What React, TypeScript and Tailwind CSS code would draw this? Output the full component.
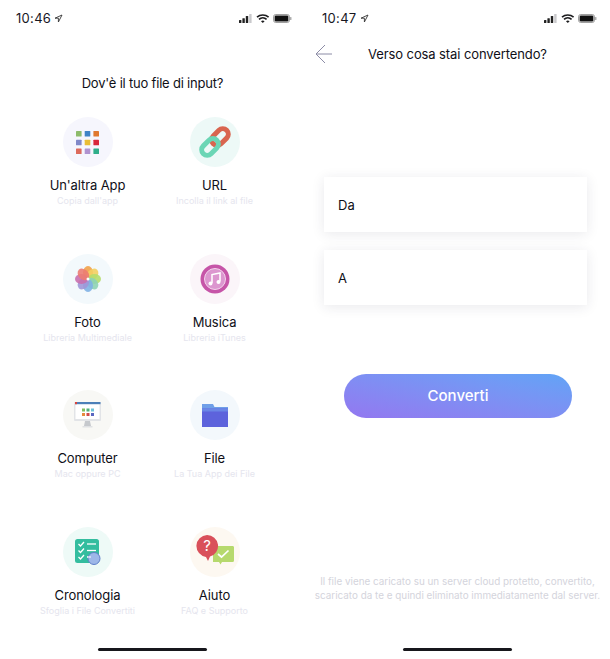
import React from "react";

function Status({ time, left }: { time: string; left: string }) {
  return (
    <div className={`flex h-[37px] shrink-0 items-center ${left} pr-[12px]`}>
      <span className="text-[13px] leading-none tracking-[0.3px] text-[#17171f]">{time}</span>
      <svg width="9" height="9" viewBox="0 0 9 9" className="ml-[3px]">
        <path d="M8 1 1 4.2h3.4V8z" fill="none" stroke="#333" strokeWidth="0.9" strokeLinejoin="round" />
      </svg>
      <svg width="54" height="11" viewBox="0 0 54 11" className="ml-auto">
        <rect x="0" y="7" width="2.4" height="3" rx=".5" fill="#222" />
        <rect x="3.4" y="5.2" width="2.4" height="4.8" rx=".5" fill="#222" />
        <rect x="6.8" y="3" width="2.4" height="7" rx=".5" fill="#222" />
        <rect x="10.2" y="1" width="2.4" height="9" rx=".5" fill="#c9c9cc" />
        <path d="M18 4.2a8.6 8.6 0 0 1 11.6 0M20 6.3a5.6 5.6 0 0 1 7.6 0" fill="none" stroke="#1c1c1e" strokeWidth="1.6" />
        <path d="M22 8.3a2.6 2.6 0 0 1 3.6 0L23.800 10z" fill="#1c1c1e" />
        <rect x="34.500" y="1.500" width="16" height="8" rx="2.200" fill="none" stroke="#888" strokeWidth=".8" />
        <rect x="35.600" y="2.600" width="13.800" height="5.800" rx="1.200" fill="#111" />
        <rect x="51.200" y="4" width="1.200" height="3" rx=".5" fill="#999" />
      </svg>
    </div>
  );
}

function HomeBar() {
  return (
    <div className="flex h-[11px] shrink-0 justify-center">
      <div className="h-[3px] w-[109px] rounded-full bg-[#17171c]" />
    </div>
  );
}

const AppsIcon = (
  <svg width="23" height="23" viewBox="0 0 23 23">
    {["#8dbb6b", "#3f83c6", "#e0782f", "#8088c8", "#e9bd34", "#d8283c", "#dd6a5c", "#b093d0", "#2fae8a"].map((c, i) => (
      <rect key={i} x={(i % 3) * 8.700} y={Math.floor(i / 3) * 8.700} width="5.600" height="5.600" rx=".6" fill={c} />
    ))}
  </svg>
);

const LinkIcon = (
  <svg width="32" height="32" viewBox="0 0 32 32">
    <g transform="rotate(-45 16 16)">
      <rect x="13.500" y="10.500" width="19" height="11" rx="5.500" fill="none" stroke="#d9654f" strokeWidth="5" />
      <rect x="-0.500" y="10.500" width="19" height="11" rx="5.500" fill="none" stroke="#6bd6b5" strokeWidth="5" />
    </g>
  </svg>
);

const PhotoIcon = (
  <svg width="28" height="28" viewBox="0 0 28 28">
    {["#f2a24a", "#f4cf60", "#b5dd6c", "#8ed3b4", "#7fb1e4", "#9e97d8", "#c96fae", "#ec7c72"].map((c, i) => (
      <ellipse key={i} cx="14" cy="7.500" rx="5" ry="6.500" fill={c} fillOpacity=".9" transform={`rotate(${i * 45} 14 14)`} />
    ))}
    <circle cx="14" cy="14" r="1.500" fill="#fff" />
  </svg>
);

const MusicIcon = (
  <svg width="30" height="30" viewBox="0 0 30 30">
    <circle cx="15" cy="15" r="14.500" fill="#c655a8" />
    <circle cx="15" cy="15" r="10.500" fill="#dc96cf" stroke="#f3d4ec" strokeWidth="1" />
    <path d="M12 19V10.500l8-1.500V17.500" fill="none" stroke="#fff" strokeWidth="1.500" />
    <circle cx="10.500" cy="19.500" r="2" fill="#fff" />
    <circle cx="18.500" cy="18" r="2" fill="#fff" />
  </svg>
);

const ComputerIcon = (
  <svg width="28" height="28" viewBox="0 0 28 28">
    <rect x="0" y="1" width="27" height="19" rx="1" fill="#e2e4e7" />
    <rect x="1.500" y="2" width="24" height="16" fill="#fff" />
    <rect x="1" y="1" width="25.500" height="2.200" fill="#4b7fb8" />
    <rect x="1" y="1" width="2" height="2.200" fill="#d9453d" />
    {["#7fbf5f", "#4fb07a", "#6ec3d8", "#e68a3c", "#d14b4b", "#5a66c0"].map((c, i) => (
      <rect key={i} x={8 + (i % 3) * 4.500} y={7.500 + Math.floor(i / 3) * 4.500} width="3" height="3" fill={c} />
    ))}
    <path d="M11 20h5l1 5h-7z" fill="#c6c9cd" />
    <rect x="8.500" y="25" width="10" height="1.500" fill="#dfe1e4" />
  </svg>
);

const FolderIcon = (
  <svg width="26" height="24" viewBox="0 0 26 24">
    <path d="M0 1h11l1.500 3H26v4H0z" fill="#6f9fe8" />
    <rect x="0" y="5.500" width="26" height="18.500" fill="#5d63dc" />
    <rect x="0" y="5.500" width="26" height="3" fill="#6a86e6" />
  </svg>
);

const HistoryIcon = (
  <svg width="26" height="26" viewBox="0 0 26 26">
    <rect x="0" y="0" width="24" height="24" rx="2.500" fill="#34bd9f" />
    {[5, 11.500, 18].map((y) => (
      <g key={y}>
        <path d={`M3.500 ${y}l2 2 3.500-4`} fill="none" stroke="#fff" strokeWidth="1.300" />
        <path d={`M12 ${y}h9`} stroke="#fff" strokeWidth="1.300" />
      </g>
    ))}
    <circle cx="19" cy="19.500" r="6" fill="#9eb7e8" stroke="#5f7fc8" strokeWidth="1" />
    <path d="M12 18h4" stroke="#fff" strokeWidth="1" />
  </svg>
);

const HelpIcon = (
  <svg width="38" height="34" viewBox="0 0 38 34">
    <path d="M17 11h20a1.500 1.500 0 0 1 1 1.500v13a1.500 1.500 0 0 1-1.500 1.500H26l-1.500 2.500L23 27h-6z" fill="#b6d96d" />
    <path d="M22 19l3.500 3 7-6.500" fill="none" stroke="#fff" strokeWidth="1.700" />
    <path d="M11 0a11 11 0 0 1 3 21.600L12 26l-2-4.100A11 11 0 0 1 11 0z" fill="#d9505a" />
    <text x="11" y="16" textAnchor="middle" fontSize="15" fill="#fff" fontFamily="Inter, sans-serif">?</text>
  </svg>
);

const items = [
  { icon: AppsIcon, bg: "bg-[#f6f6fd]", label: "Un'altra App", sub: "Copia dall'app" },
  { icon: LinkIcon, bg: "bg-[#edf9f7]", label: "URL", sub: "Incolla il link al file" },
  { icon: PhotoIcon, bg: "bg-[#f3f9fc]", label: "Foto", sub: "Libreria Multimediale" },
  { icon: MusicIcon, bg: "bg-[#fbf5f9]", label: "Musica", sub: "Libreria iTunes" },
  { icon: ComputerIcon, bg: "bg-[#f8f8f5]", label: "Computer", sub: "Mac oppure PC" },
  { icon: FolderIcon, bg: "bg-[#f3f8fc]", label: "File", sub: "La Tua App dei File" },
  { icon: HistoryIcon, bg: "bg-[#eefaf7]", label: "Cronologia", sub: "Sfoglia i File Convertiti" },
  { icon: HelpIcon, bg: "bg-[#fdf8f1]", label: "Aiuto", sub: "FAQ e Supporto" },
];

export default function App() {
  return (
    <div className="flex h-[659px] w-[610px] overflow-hidden bg-white font-['Inter',sans-serif]">
      <div className="flex w-[305px] flex-col">
        <Status time="10:46" left="pl-[16px]" />
        <h1 className="mt-[37px] text-center text-[13px] leading-[18px] font-normal tracking-[-0.2px] text-[#0f0f17]">Dov'è il tuo file di input?</h1>
        <div className="mt-[25px] ml-[24px] grid grid-cols-[127px_127px] grid-rows-[136.700px_136.700px_136.700px_auto]">
          {items.map((it) => (
            <div key={it.label} className="flex flex-col items-center">
              <div className={`flex h-[50px] w-[50px] items-center justify-center rounded-full ${it.bg}`}>{it.icon}</div>
              <div className="mt-[10px] text-[13px] leading-[17px] tracking-[-0.1px] whitespace-nowrap text-[#0f0f17]">{it.label}</div>
              <div className="text-[9px] leading-[13px] whitespace-nowrap text-[#e5e5ee]">{it.sub}</div>
            </div>
          ))}
        </div>
        <div className="mt-auto">
          <HomeBar />
        </div>
      </div>
      <div className="flex w-[305px] flex-col">
        <Status time="10:47" left="pl-[17px]" />
        <div className="relative mt-[6px] h-[22px]">
          <svg width="18" height="20" viewBox="0 0 18 20" className="absolute top-[1px] left-[10px]">
            <path d="M17 10H1M10 1 1 10l9 9" fill="none" stroke="#8c8ca6" strokeWidth="1" />
          </svg>
          <h2 className="text-center text-[13px] leading-[22px] font-normal tracking-[-0.1px] text-[#0f0f17]">Verso cosa stai convertendo?</h2>
        </div>
        <div className="mt-[112px] ml-[19px] flex w-[263px] flex-col gap-[18px]">
          {["Da", "A"].map((t) => (
            <div key={t} className="flex h-[55px] items-center bg-white pt-[2px] pl-[14px] text-[13px] text-[#0f0f17] shadow-[0_2px_12px_rgba(40,40,70,0.10)]">
              {t}
            </div>
          ))}
        </div>
        <div className="mt-[69px] ml-[39px] flex h-[44px] w-[228px] items-center justify-center rounded-full bg-linear-to-tr from-[#9377f0] to-[#60a4f6] pt-[1px] text-[15px] font-medium text-white">
          Converti
        </div>
        <p className="mt-auto text-center text-[9.900px] leading-[14px] whitespace-nowrap text-[#d4d4dc]">
          Il file viene caricato su un server cloud protetto, convertito,
          <br />
          scaricato da te e quindi eliminato immediatamente dal server.
        </p>
        <div className="mt-[46px]">
          <HomeBar />
        </div>
      </div>
    </div>
  );
}
